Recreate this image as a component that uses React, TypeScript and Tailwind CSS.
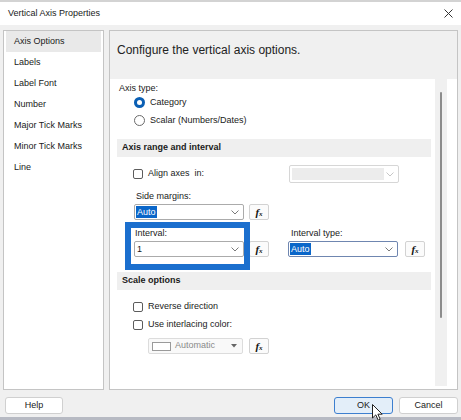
import React from "react";

const Chevron = ({ color = "#7a7a7a" }: { color?: string }) => (
  <svg width="8" height="5" viewBox="0 0 8 5" fill="none">
    <path d="M0.5 0.5L4 4L7.5 0.5" stroke={color} strokeWidth="1" />
  </svg>
);

const Fx = ({ className = "" }: { className?: string }) => (
  <div
    className={`w-[20px] h-[16px] shrink-0 flex items-center justify-center rounded-[2px] border border-[#d2d2d2] bg-[#fbfbfb] ${className}`}
  >
    <span className="font-['Liberation_Serif',serif] italic font-bold text-[11px] leading-none text-[#111]">
      f<span className="text-[7px]">x</span>
    </span>
  </div>
);

const Checkbox = () => (
  <div className="w-[10px] h-[10px] rounded-[2px] border border-[#5c5c5c] bg-white shrink-0" />
);

const Combo = ({
  value,
  selected = false,
  focused = false,
  w = "w-[110px]",
}: {
  value: string;
  selected?: boolean;
  focused?: boolean;
  w?: string;
}) => (
  <div
    className={`${w} h-[16px] shrink-0 flex items-center justify-between bg-white rounded-[2px] border pl-[1px] pr-[4px] ${
      focused ? "border-[#6f86b0]" : "border-[#ababab]"
    }`}
  >
    {selected ? (
      <span className="bg-[#0a66c9] text-white leading-[12px] px-[1px]">{value}</span>
    ) : (
      <span className="leading-[12px] pl-[1px]">{value}</span>
    )}
    <Chevron />
  </div>
);

const navItems = [
  "Axis Options",
  "Labels",
  "Label Font",
  "Number",
  "Major Tick Marks",
  "Minor Tick Marks",
  "Line",
];

export default function App() {
  return (
    <div className="w-[461px] h-[420px] bg-[#f0f0f0] flex flex-col overflow-hidden relative font-['Liberation_Sans',Arial,sans-serif] text-[9px] text-[#1a1a1a]">
      {/* title bar */}
      <div className="h-[25px] shrink-0 bg-white border-t-2 border-[#d3d3d3] flex items-center justify-between pl-[8px] pr-[5px]">
        <span className="text-[9px]">Vertical Axis Properties</span>
        <svg width="9" height="9" viewBox="0 0 9 9" className="mr-[3px]">
          <path d="M0.5 0.5L8.5 8.5M8.5 0.5L0.5 8.5" stroke="#333" strokeWidth="1" />
        </svg>
      </div>

      {/* body */}
      <div className="flex gap-[5px] px-[3px] pt-[5px]">
        <div className="w-[101px] h-[360px] shrink-0 bg-white border border-[#c4c4c4] px-[2px]">
          {navItems.map((item, i) => (
            <div
              key={item}
              className={`h-[21px] flex items-center pl-[8px] ${i === 0 ? "bg-[#e9e9e9]" : ""}`}
            >
              {item}
            </div>
          ))}
        </div>

        <div className="flex-1 h-[360px] border border-[#c4c4c4] flex flex-col">
          <div className="h-[48px] shrink-0 bg-[#f0f0f0] pl-[7px] pt-[12px]">
            <span className="text-[12px] leading-[14px] text-[#222]">
              Configure the vertical axis options.
            </span>
          </div>

          <div className="flex-1 bg-white flex">
            <div className="w-[314px] ml-[7px] flex flex-col pt-[3px]">
              <div className="h-[12px] leading-[12px] pl-[2px]">Axis type:</div>
              <div className="h-[17px] flex items-center pl-[17px] gap-[5px]">
                <div className="w-[11px] h-[11px] rounded-full bg-[#0a5fb4] flex items-center justify-center">
                  <div className="w-[5px] h-[5px] rounded-full bg-white" />
                </div>
                <span>Category</span>
              </div>
              <div className="h-[19px] flex items-center pl-[17px] gap-[5px]">
                <div className="w-[11px] h-[11px] rounded-full border border-[#6a6a6a]" />
                <span>Scalar (Numbers/Dates)</span>
              </div>

              <div className="mt-[9px] h-[18px] bg-[#efefef] flex items-center pl-[5px] font-bold">
                Axis range and interval
              </div>

              <div className="mt-[8px] h-[18px] flex items-center">
                <div className="w-[172px] flex items-center pl-[16px] gap-[5px]">
                  <Checkbox />
                  <span>Align axes&nbsp; in:</span>
                </div>
                <div className="w-[110px] h-[18px] border border-[#d6d6d6] rounded-[2px] flex items-center justify-between pl-[2px] pr-[4px]">
                  <div className="w-[92px] h-[12px] bg-[#ececec]" />
                  <Chevron color="#c6c6c6" />
                </div>
              </div>

              <div className="mt-[7px] h-[12px] leading-[12px] pl-[19px]">Side margins:</div>
              <div className="mt-[2px] flex items-center pl-[17px] gap-[5px]">
                <Combo value="Auto" selected />
                <Fx />
              </div>

              <div className="relative flex pt-[7px]">
                <div className="w-[171px] flex flex-col">
                  <div className="h-[12px] leading-[12px] pl-[18px]">Interval:</div>
                  <div className="mt-[2px] flex items-center pl-[17px] gap-[5px]">
                    <Combo value="1" />
                    <Fx />
                  </div>
                </div>
                <div className="flex flex-col">
                  <div className="h-[12px] leading-[12px] pl-[3px]">Interval type:</div>
                  <div className="mt-[2px] flex items-center gap-[7px]">
                    <Combo value="Auto" selected focused />
                    <Fx />
                  </div>
                </div>
                <div className="absolute left-[8px] top-[2px] w-[125px] h-[48px] border-[6px] border-[#1b6fce]" />
              </div>

              <div className="mt-[15px] h-[18px] bg-[#efefef] flex items-center pl-[5px] font-bold">
                Scale options
              </div>

              <div className="mt-[8px] h-[18px] flex items-center pl-[16px] gap-[5px]">
                <Checkbox />
                <span>Reverse direction</span>
              </div>
              <div className="h-[18px] flex items-center pl-[16px] gap-[5px]">
                <Checkbox />
                <span>Use interlacing color:</span>
              </div>

              <div className="mt-[4px] flex items-center pl-[31px] gap-[6px]">
                <div className="w-[95px] h-[16px] rounded-[2px] border border-[#dcdcdc] bg-[#f9f9f9] flex items-center pl-[3px] pr-[5px]">
                  <div className="w-[19px] h-[9px] border border-[#9a9a9a] bg-white" />
                  <span className="ml-[4px] text-[#8a8a8a] flex-1">Automatic</span>
                  <svg width="6" height="4" viewBox="0 0 6 4">
                    <path d="M0 0H6L3 3.5Z" fill="#666" />
                  </svg>
                </div>
                <Fx />
              </div>
            </div>

            <div className="w-[12px] ml-[4px] mb-[3px] bg-[#f0f0f0] pt-[13px] flex justify-center">
              <div className="w-[2px] h-[226px] rounded-full bg-[#8c8c8c]" />
            </div>
          </div>
        </div>
      </div>

      {/* footer */}
      <div className="flex items-center pt-[7px] pl-[5px] pr-[3px]">
        <button className="w-[58px] h-[17px] rounded-[3px] border border-[#d0d0d0] bg-white text-[9px]">
          Help
        </button>
        <div className="flex-1" />
        <button className="w-[59px] h-[17px] rounded-[3px] border border-[#3d7fcf] bg-[#e3eef9] text-[9px]">
          OK
        </button>
        <button className="ml-[6px] w-[59px] h-[17px] rounded-[3px] border border-[#d0d0d0] bg-white text-[9px]">
          Cancel
        </button>
      </div>
      <div className="flex-1" />
      <div className="h-[3px] bg-[#b7bac3]" />

      {/* mouse pointer */}
      <svg
        className="absolute left-[372px] top-[404px]"
        width="11"
        height="17"
        viewBox="0 0 11 17"
      >
        <path
          d="M0.5 0.5V14L3.8 10.9L6.2 16.2L8.2 15.3L5.9 10.2H10.2Z"
          fill="white"
          stroke="#222"
          strokeWidth="1"
          strokeLinejoin="round"
        />
      </svg>
    </div>
  );
}
